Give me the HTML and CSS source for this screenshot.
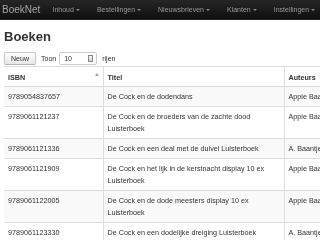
FILE: index.html
```html
<!DOCTYPE html>
<html lang="nl">

<head>
    <meta charset="UTF-8">
    <meta name="viewport" content="width=device-width, initial-scale=1.0">
    <link rel="stylesheet" href="styles.css">
    <title>BoekNet - Boeken</title>
</head>

<body>
    <div class="navbar">
        <span class="brand">BoekNet</span>
        <ul class="nav">
            <li>Inhoud <b class="caret"></b></li>
            <li>Bestellingen <b class="caret"></b></li>
            <li>Nieuwsbrieven <b class="caret"></b></li>
            <li>Klanten <b class="caret"></b></li>
            <li>Instellingen <b class="caret"></b></li>
        </ul>
    </div>

    <div class="container">
        <h1>Boeken</h1>

        <div class="toolbar">
            <button class="btn">Neuw</button>
            <span class="label">Toon</span>
            <span class="select">10<span class="select-arrow"></span></span>
            <span class="label">rijen</span>
        </div>

        <table class="table">
            <colgroup>
                <col class="col-isbn">
                <col class="col-titel">
                <col class="col-auteurs">
            </colgroup>
            <thead>
                <tr>
                    <th class="sorted">ISBN <span class="sort-up"></span></th>
                    <th>Titel</th>
                    <th>Auteurs</th>
                </tr>
            </thead>
            <tbody>
                <tr>
                    <td>9789054837657</td>
                    <td>De Cock en de dodendans</td>
                    <td>Appie Baantjer</td>
                </tr>
                <tr>
                    <td>9789061121237</td>
                    <td>De Cock en de broeders van de zachte dood Luisterboek</td>
                    <td>Appie Baantjer</td>
                </tr>
                <tr>
                    <td>9789061121336</td>
                    <td>De Cock en een deal met de duivel Luisterboek</td>
                    <td>A. Baantjer</td>
                </tr>
                <tr>
                    <td>9789061121909</td>
                    <td>De Cock en het lijk in de kerstnacht display 10 ex Luisterboek</td>
                    <td>Appie Baantjer</td>
                </tr>
                <tr>
                    <td>9789061122005</td>
                    <td>De Cock en de dode meesters display 10 ex Luisterboek</td>
                    <td>Appie Baantjer</td>
                </tr>
                <tr>
                    <td>9789061123330</td>
                    <td>De Cock en een dodelijke dreiging Luisterboek</td>
                    <td>A. Baantjer</td>
                </tr>
            </tbody>
        </table>
    </div>
</body>

</html>
```

FILE: styles.css
```css
body {
    margin: 0;
    overflow: hidden;
    font-family: "Liberation Sans", Arial, sans-serif;
    color: #333;
    background: #fff;
    -webkit-font-smoothing: antialiased;
}

/* top bar */
.navbar {
    display: flex;
    align-items: center;
    height: 20px;
    background: linear-gradient(#262626, #0f0f0f);
    border-bottom: 1px solid #252525;
    box-sizing: border-box;
}

.brand {
    font-size: 10px;
    color: #a6a6a6;
    padding: 0 4px 0 2px;
    will-change: transform;
}

.nav {
    display: flex;
    list-style: none;
    margin: 0;
    padding: 0;
    white-space: nowrap;
    will-change: transform;
}

.nav li {
    font-size: 7px;
    color: #999;
    padding: 0 8.5px;
    display: flex;
    align-items: center;
    gap: 2px;
}

.caret {
    display: inline-block;
    width: 0;
    height: 0;
    border-top: 2.5px solid #888;
    border-left: 2px solid transparent;
    border-right: 2px solid transparent;
    margin-top: 1px;
}

/* page */
.container {
    padding: 0 0 0 4px;
}

h1 {
    font-size: 13px;
    line-height: 16px;
    margin: 9px 0 7px;
    color: #333;
    will-change: transform;
}

.toolbar {
    display: flex;
    align-items: center;
    height: 13px;
    margin-bottom: 1px;
    font-size: 7px;
    will-change: transform;
}

.btn {
    font-family: inherit;
    font-size: 7px;
    color: #333;
    height: 13px;
    width: 32px;
    padding: 0;
    border: 1px solid #c8c8c8;
    border-bottom-color: #b3b3b3;
    border-radius: 2px;
    background: linear-gradient(#fff, #e6e6e6);
}

.label {
    margin: 0 3px 0 5px;
}

.select {
    position: relative;
    box-sizing: border-box;
    width: 38px;
    height: 13px;
    padding-left: 4px;
    line-height: 11px;
    border: 1px solid #ccc;
    border-radius: 2px;
    background: #fff;
}

.select-arrow {
    position: absolute;
    right: 3px;
    top: 2px;
    width: 5px;
    height: 7px;
    background: linear-gradient(#fafafa, #ccc);
    border: 1px solid #888;
    box-sizing: border-box;
}

/* table */
.table {
    border-collapse: collapse;
    table-layout: fixed;
    width: 380px;
    font-size: 7.2px;
    line-height: 12px;
    color: #333;
    border-top: 1px solid #ddd;
    will-change: transform;
}

.col-isbn {
    width: 99px;
}

.col-titel {
    width: 181px;
}

.col-auteurs {
    width: 100px;
}

.table th,
.table td {
    text-align: left;
    vertical-align: top;
    color: #333;
    padding: 4px 4px 3px;
    border-bottom: 1px solid #ddd;
    border-left: 1px solid #ddd;
}

.table th {
    font-weight: bold;
    padding: 5px 4px 2px;
}

.table th:first-child,
.table td:first-child {
    border-left: 0;
}

.table tbody tr:nth-child(odd) td {
    background: #f9f9f9;
}

.sorted {
    position: relative;
}

.sort-up {
    position: absolute;
    right: 4px;
    top: 6px;
    width: 0;
    height: 0;
    border-bottom: 3px solid #8ea6dc;
    border-left: 2px solid transparent;
    border-right: 2px solid transparent;
}
```
